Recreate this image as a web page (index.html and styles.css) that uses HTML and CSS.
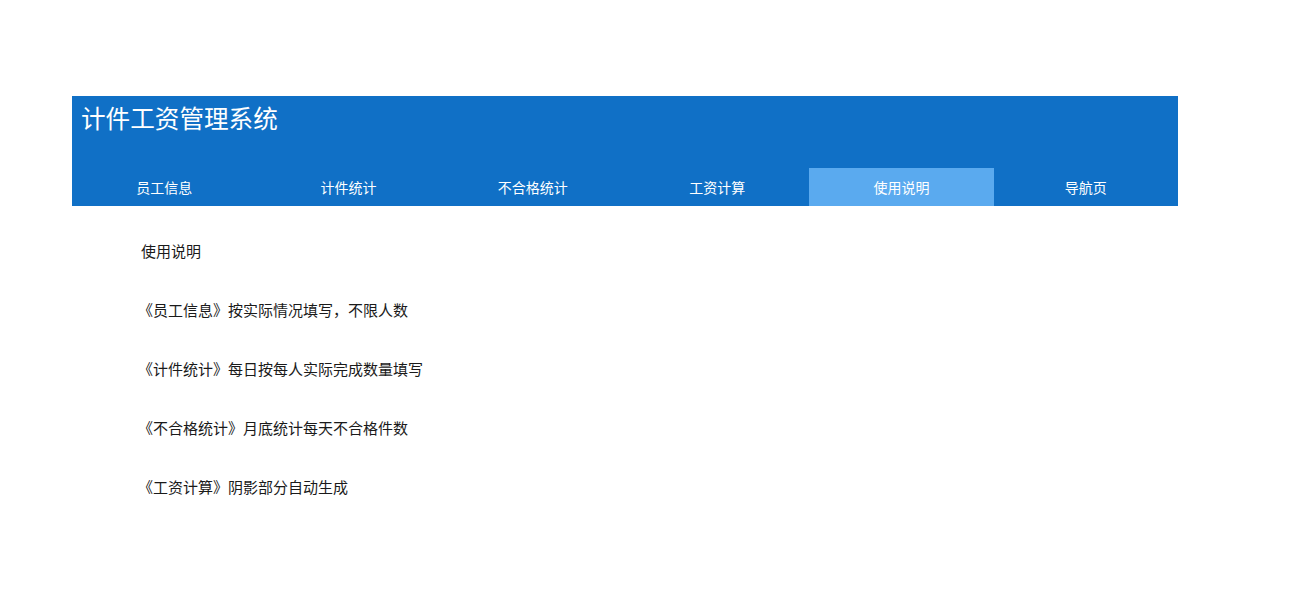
FILE: index.html
```html
<!DOCTYPE html>
<html lang="zh-CN">
<head>
<meta charset="utf-8">
<title>计件工资管理系统</title>
<link rel="stylesheet" href="styles.css">
</head>
<body>
<div class="page">
  <header class="header">
    <h1 class="title">计件工资管理系统</h1>
    <nav class="nav">
      <a class="nav-item">员工信息</a>
      <a class="nav-item">计件统计</a>
      <a class="nav-item">不合格统计</a>
      <a class="nav-item">工资计算</a>
      <a class="nav-item active">使用说明</a>
      <a class="nav-item">导航页</a>
    </nav>
  </header>
  <main class="content">
    <p class="line heading">使用说明</p>
    <p class="line">《员工信息》按实际情况填写，不限人数</p>
    <p class="line">《计件统计》每日按每人实际完成数量填写</p>
    <p class="line">《不合格统计》月底统计每天不合格件数</p>
    <p class="line">《工资计算》阴影部分自动生成</p>
  </main>
</div>
</body>
</html>
```
FILE: styles.css
```css
html, body {
  margin: 0;
  padding: 0;
  background: #ffffff;
  font-family: "Noto Sans CJK SC", "Noto Sans", sans-serif;
}
.page {
  width: 1106px;
  margin: 96px 0 0 72px;
}
.header {
  background: #1070c6;
  color: #ffffff;
}
.title {
  margin: 0;
  height: 72px;
  box-sizing: border-box;
  padding: 5px 0 0 9px;
  font-size: 24.6px;
  line-height: 32px;
  font-weight: normal;
}
.nav {
  display: grid;
  grid-template-columns: repeat(6, 1fr);
  height: 38px;
}
.nav-item {
  display: block;
  text-align: center;
  font-size: 14px;
  line-height: 38px;
  color: #ffffff;
  text-decoration: none;
}
.nav-item.active {
  background: #5aaaef;
}
.content {
  padding: 15px 0 0 66px;
}
.line {
  margin: 0;
  font-size: 15px;
  line-height: 59px;
  color: #1a1a1a;
}
.heading {
  padding-left: 3px;
}
```
